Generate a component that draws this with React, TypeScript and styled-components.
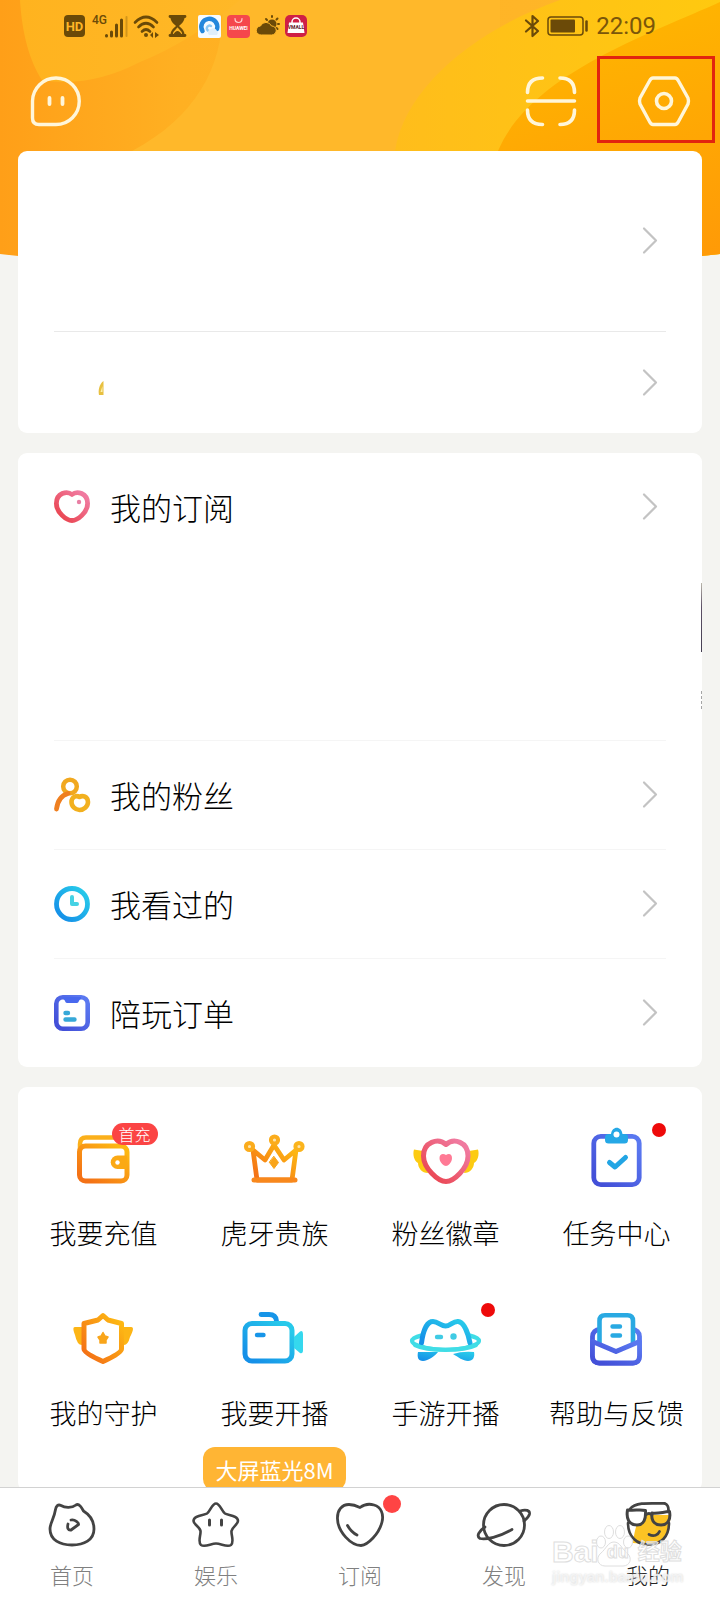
import React from "react";
import styled, { createGlobalStyle } from "styled-components";

const GlobalStyle = createGlobalStyle`
  * { box-sizing: border-box; }
  body {
    margin: 0;
    background: #f4f4f1;
    color: #000;
    font-family: "Noto Sans CJK SC", "Noto Sans", sans-serif;
    font-weight: 300;
  }
  a { color: inherit; text-decoration: none; }
  button { font: inherit; color: inherit; background: none; border: 0; padding: 0; cursor: pointer; }
  svg { display: block; }
`;

/* ---------- page frame ---------- */

const Screen = styled.div`
  position: relative;
  display: flex;
  flex-direction: column;
  height: 100vh;
  overflow: hidden;
`;

const Backdrop = styled.svg`
  position: absolute;
  top: 0;
  left: 0;
  width: 100%;
  height: 270px;
`;

const Header = styled.header`
  position: relative;
  flex: none;
`;

const StatusBar = styled.div`
  display: flex;
  align-items: center;
  height: 52px;
  padding: 0 64px;
  color: #6b4a08;
`;

const StatusGroup = styled.div<{ $gap: number }>`
  display: flex;
  align-items: center;
  gap: ${(p) => p.$gap}px;
`;

const RightStatus = styled(StatusGroup)`
  margin-left: auto;
`;

const Clock = styled.time`
  font: 400 24px/28px Roboto, sans-serif;
  color: #7a560a;
`;

const NavBar = styled.div`
  display: flex;
  align-items: center;
  height: 99px;
  padding: 0 5px 2px 30px;
`;

const IconButton = styled.button`
  display: flex;
  align-items: center;
  justify-content: center;
`;

const ScanButton = styled(IconButton)`
  margin-left: auto;
  margin-right: 20px;
`;

const SettingsButton = styled(IconButton)`
  width: 118px;
  height: 87px;
  padding: 4px 0 0 15px;
  margin-bottom: 3px;
  border: 3px solid #e2240f;
`;

const Content = styled.main`
  position: relative;
  flex: 1;
  min-height: 0;
  display: flex;
  flex-direction: column;
  gap: 20px;
  padding: 0 18px;
  overflow-y: auto;
  scrollbar-width: none;
`;

const Card = styled.section`
  flex: none;
  background: #fff;
  border-radius: 9px;
  overflow: hidden;
`;

/* ---------- list rows ---------- */

const Row = styled.a<{ $height: number; $line?: string }>`
  display: flex;
  align-items: center;
  height: ${(p) => p.$height}px;
  margin: 0 36px;
  padding-right: 8px;
  border-top: ${(p) => (p.$line ? `1px solid ${p.$line}` : "0")};
`;

const RowLabel = styled.span`
  margin-left: 20px;
  font-size: 31px;
  line-height: 44px;
`;

const RowEnd = styled.span`
  margin-left: auto;
`;

const Fleck = styled.svg`
  margin-left: 44px;
  margin-top: 10px;
`;

const Shelf = styled.div`
  display: flex;
  flex-direction: column;
  align-items: flex-end;
  gap: 39px;
  height: 180px;
  padding-top: 23px;
`;

const ShelfCover = styled.div`
  width: 1px;
  height: 69px;
  background: linear-gradient(#b9b6ab, #5c5066 35%, #453f52);
`;

const ShelfCaption = styled.div`
  height: 18px;
  border-left: 1px dashed #a5a5a5;
`;

/* ---------- shortcut grid ---------- */

const Grid = styled.div`
  display: grid;
  grid-template-columns: repeat(4, 1fr);
`;

const Shortcut = styled.a`
  display: flex;
  flex-direction: column;
  align-items: center;
  gap: 22px;
  height: 180px;
  padding-top: 40px;
`;

const ShortcutIcon = styled.span`
  position: relative;
`;

const ShortcutLabel = styled.span`
  font-size: 27px;
  line-height: 40px;
  white-space: nowrap;
`;

const Dot = styled.span<{ $size: number; $color: string; $left: number; $top: number }>`
  position: absolute;
  left: ${(p) => p.$left}px;
  top: ${(p) => p.$top}px;
  width: ${(p) => p.$size}px;
  height: ${(p) => p.$size}px;
  border-radius: 50%;
  background: ${(p) => p.$color};
`;

const Tag = styled.span`
  position: absolute;
  left: 44px;
  top: -4px;
  width: 46px;
  border-radius: 11px;
  background: #fb4444;
  color: #fff;
  font-size: 16px;
  line-height: 22px;
  text-align: center;
`;

const Promo = styled.div`
  grid-column: 2;
  justify-self: center;
  padding: 0 12px;
  border-radius: 12px;
  background: #ffb534;
  color: #fff;
  font-size: 22px;
  font-weight: 400;
  line-height: 44px;
  white-space: nowrap;
`;

/* ---------- tab bar ---------- */

const TabBar = styled.nav`
  position: relative;
  flex: none;
  display: grid;
  grid-template-columns: repeat(5, 1fr);
  padding: 13px 0 11px;
  border-top: 1px solid #d2d2d2;
  background: #fff;
`;

const Tab = styled.button<{ $active?: boolean }>`
  display: flex;
  flex-direction: column;
  align-items: center;
  gap: 10px;
  font-size: 22px;
  line-height: 30px;
  color: ${(p) => (p.$active ? "#222" : "#808080")};
`;

const Watermark = styled.div`
  position: absolute;
  right: 38px;
  bottom: 14px;
  width: 130px;
  pointer-events: none;
  font-family: "Liberation Sans", "Noto Sans CJK SC", sans-serif;
  font-weight: 700;
  color: rgba(255, 255, 255, 0.6);
`;

const WatermarkName = styled.div`
  position: relative;
  display: flex;
  align-items: flex-end;
  height: 44px;
  line-height: 32px;
  font-size: 30px;
  -webkit-text-stroke: 1px #dedede;
`;

const WatermarkPaw = styled.svg`
  position: absolute;
  left: 42px;
  top: 0;
`;

const WatermarkSmall = styled.span<{ $indent: number; $size: number }>`
  position: relative;
  margin-left: ${(p) => p.$indent}px;
  font-size: ${(p) => p.$size}px;
  white-space: nowrap;
`;

const WatermarkUrl = styled.div`
  font-size: 15px;
  line-height: 18px;
  text-shadow: 0 0 2px #d4d4d4;
`;

/* ---------- icons ---------- */

const Gradients = () => (
  <svg width="0" height="0" aria-hidden="true" style={{ position: "absolute" }}>
    <defs>
      {[
        ["orange", "#f47216", "#fdb713"],
        ["rose", "#ea4550", "#f07aa0"],
        ["sky", "#1590e8", "#27c9ea"],
        ["indigo", "#4350d8", "#5a78f0"],
      ].map(([id, from, to]) => (
        <linearGradient key={id} id={id} x1="0" y1="1" x2="1" y2="0">
          <stop offset="0.1" stopColor={from} />
          <stop offset="0.9" stopColor={to} />
        </linearGradient>
      ))}
    </defs>
  </svg>
);

type ArtProps = { w: number; h: number; children: React.ReactNode };
const Art = ({ w, h, children }: ArtProps) => (
  <svg width={w} height={h} viewBox={`0 0 ${w} ${h}`} fill="none" strokeLinecap="round" strokeLinejoin="round" overflow="visible" aria-hidden="true">
    {children}
  </svg>
);

const Chevron = () => (
  <Art w={16} h={28}>
    <path d="M2 1.500L14 13.500L2 25.500" stroke="#c3c3c3" strokeWidth="2.200" />
  </Art>
);

const rowIcons = {
  heart: (
    <Art w={36} h={36}>
      <path d="M18 5.500C23 1.500 33.600 4 33.600 14.500C33.600 23.500 23.500 31.500 18 31.500C12.500 31.500 2.400 23.500 2.400 14.500C2.400 4 13 1.500 18 5.500Z" stroke="url(#rose)" strokeWidth="4.800" />
      <circle cx="25" cy="13" r="2.200" fill="#e87fa4" />
    </Art>
  ),
  fans: (
    <Art w={36} h={36}>
      <circle cx="16" cy="9.500" r="6.800" stroke="#f1a81f" strokeWidth="4.500" />
      <path d="M14 16.500C7 18.500 3.500 24 2.500 32" stroke="#ef7f20" strokeWidth="4.800" />
      <path d="M25.500 20C28.500 18 34 19.500 34 25C34 29.500 29.500 33 25.500 33C21.500 33 17.500 29.500 17.500 25C17.500 19.500 22.500 18 25.500 20Z" stroke="#f2b01f" strokeWidth="4.600" />
    </Art>
  ),
  clock: (
    <Art w={36} h={36}>
      <circle cx="18" cy="18" r="15.500" stroke="url(#sky)" strokeWidth="4.800" />
      <path d="M18 11V18H23" stroke="#45d2e4" strokeWidth="4" />
    </Art>
  ),
  order: (
    <Art w={36} h={36}>
      <rect x="2.300" y="2.300" width="31.400" height="31.400" rx="6.500" stroke="url(#indigo)" strokeWidth="4.600" />
      <path d="M9 2H27V4C25 4 25 8 23 8H13C11 8 11 4 9 4Z" fill="#4868ee" />
      <path d="M11.500 18H14M11.500 24.500H20.500" stroke="#36a8d8" strokeWidth="4.400" />
    </Art>
  ),
};

const gridIcons = {
  wallet: (
    <Art w={72} h={64}>
      <path d="M12 22V17Q12 10.500 18 10.500H50Q54 10.500 55 18" stroke="#fbb01b" strokeWidth="4.500" />
      <rect x="11.500" y="19" width="47.500" height="35" rx="6" stroke="url(#orange)" strokeWidth="5" />
      <path d="M59 28.500H49.500A6.500 6.500 0 0 0 49.500 42H59Z" fill="#fba914" />
      <circle cx="49.500" cy="35.500" r="2.200" fill="#fff" />
    </Art>
  ),
  crown: (
    <Art w={72} h={64}>
      <path d="M14 23L26 33L35 18L45 33L57 23L53 53H18Z" stroke="url(#orange)" strokeWidth="4.800" />
      <path d="M15 53H56" stroke="#f8881c" strokeWidth="5" />
      <path d="M35 29.500L39.500 35.500L35 41.500L30.500 35.500Z" fill="#f9a51a" stroke="#f9a51a" />
      <circle cx="10.500" cy="19.500" r="3.600" fill="#fde4ae" stroke="#fbac1c" strokeWidth="4" />
      <circle cx="35.500" cy="13" r="3.600" fill="#fde4ae" stroke="#fbac1c" strokeWidth="4" />
      <circle cx="60" cy="19.500" r="3.600" fill="#fde4ae" stroke="#fbb41c" strokeWidth="4" />
    </Art>
  ),
  badge: (
    <Art w={72} h={64}>
      <path d="M13 24L4 22.500C2.500 27 4 34 8 36C8 41 12 46 18 46ZM59 24L68 22.500C69.500 27 68 34 64 36C64 41 60 46 54 46Z" fill="#fccb12" />
      <path d="M36 17.500C44 10.500 58 15 58 29C58 41 44 54.500 36 54.500C28 54.500 13.500 41 13.500 29C13.500 15 28 10.500 36 17.500Z" fill="#fff" stroke="url(#rose)" strokeWidth="5" />
      <path d="M36 28C38.500 26 42 26.500 42 31C42 35.500 38 39 36 39C34 39 29.500 35.500 29.500 31C29.500 26.500 33.500 26 36 28Z" fill="#ff7a95" />
    </Art>
  ),
  task: (
    <Art w={72} h={64}>
      <rect x="12.800" y="9.300" width="45.400" height="48.400" rx="7" stroke="url(#indigo)" strokeWidth="4.800" />
      <path d="M28 7H30C31 -1.500 40.500 -1.500 41.500 7H44Q47 7 47 10V13Q47 16.500 43.500 16.500H27.500Q24 16.500 24 13V10Q24 7 28 7Z" fill="#25a8e6" />
      <circle cx="35.500" cy="7.500" r="3" fill="#fff" />
      <path d="M28.500 35.500L34 40L44.500 30.500" stroke="#22a5e4" strokeWidth="5" />
    </Art>
  ),
  guard: (
    <Art w={72} h={64}>
      <path d="M14 20H7C4 20 6 25 7 28Q9 38 14 38ZM56 20H63C67 20 64 26 62 30Q60 38 56 38Z" fill="#fdb515" />
      <path d="M35 8.500L40 13L53.500 16.500V42Q53.500 46 35 54.500Q16 46 16 42V16.500L30 13Z" fill="#fff" stroke="url(#orange)" strokeWidth="5" />
      <path d="M35 25.500L37 29L40 30L38 33V36H32V33L30 30L33 29Z" fill="#f9a51a" stroke="#f9a51a" strokeWidth="1.500" />
    </Art>
  ),
  camera: (
    <Art w={72} h={64}>
      <path d="M22 7.500H30Q37 7.500 37.500 14" stroke="#1795e8" strokeWidth="4.800" />
      <rect x="6" y="16.500" width="47" height="37.500" rx="7" stroke="url(#sky)" strokeWidth="5" />
      <path d="M55 30L61 24.500Q64 23 64 27V43Q64 47 61 46L55 41Z" fill="#35d8ee" />
      <path d="M18 28H24.500" stroke="#1795e8" strokeWidth="4.400" />
    </Art>
  ),
  mobile: (
    <Art w={72} h={64}>
      <path d="M8 45H28C26 48 18 54 13 54C8 54 7 50 8 45ZM43 47Q52 44 64 45C65 50 63 54 58 54C53 54 48 50 43 47Z" fill="url(#sky)" />
      <ellipse cx="35.500" cy="34" rx="33.500" ry="8" stroke="#40dde6" strokeWidth="4.200" />
      <path d="M11.500 37C13 24 17 14.500 23 14.500C28 14.500 31 19 35.500 19C40 19 43 14 48 14.500C54 15 58 26 60 37C50 42 22 42 11.500 37Z" fill="#fff" />
      <path d="M11.500 36C13 24 17 14.500 23 14.500C28 14.500 31 19 35.500 19C40 19 43 14 48 14.500C54 15 58 26 60 36" stroke="url(#sky)" strokeWidth="5" />
      <path d="M5 38C18 44.500 53 44.500 66 38" stroke="#40dde6" strokeWidth="4.200" />
      <path d="M27 30H31" stroke="#40cbe4" strokeWidth="4.400" />
      <circle cx="43.500" cy="29.500" r="3.200" fill="#40cbe4" />
    </Art>
  ),
  help: (
    <Art w={72} h={64}>
      <rect x="11.500" y="22.500" width="47" height="33.500" rx="7" stroke="url(#indigo)" strokeWidth="4.800" />
      <path d="M18.500 38V14Q18.500 8.300 24 8.300H46.500Q52 8.300 52 14V38L35 45Z" fill="#fff" stroke="#29a9e2" strokeWidth="4.600" />
      <path d="M11.500 34.500L35 44.500L58.500 34.500V49Q58.500 56 52 56H18.500Q11.500 56 11.500 49Z" fill="#fff" stroke="url(#indigo)" strokeWidth="4.800" />
      <path d="M31.500 19.500H39M31.500 28.500H39" stroke="#29a9e2" strokeWidth="4.400" />
    </Art>
  ),
};

const INK = "#434343";

const tabIcons = {
  home: (
    <Art w={56} h={48}>
      <path d="M11.500 8.500C12 5 14 3 17 4.500C21 7 28 7 32 4C35 2 38 7 39.500 10C46 14 50 21 50 28C50 39 40 44 28 44C16 44 6 39 6 28C6 22 10 18 11.500 8.500Z" stroke={INK} strokeWidth="2.800" />
      <path d="M24 23C23 27 24 29.500 27 29L34.500 23.500C35 22 31 18 27 19" stroke={INK} strokeWidth="2.800" />
    </Art>
  ),
  fun: (
    <Art w={56} h={48}>
      <path d="M28 2.500C32 2.500 33.500 10 37 12.500C40 14.500 50 14 50 20C50 23.500 44 26 43.500 30C43 34 46.500 41 43 44C39 46.500 33 42.500 28 42.500C23 42.500 17 46.500 13 44C9.500 41 13 34 12.500 30C12 26 5.500 23.500 5.500 20C5.500 14 16 14.500 19 12.500C22.500 10 24 2.500 28 2.500Z" stroke={INK} strokeWidth="2.600" />
      <path d="M21.500 19V24M33.500 19V24" stroke={INK} strokeWidth="3" />
    </Art>
  ),
  follow: (
    <Art w={56} h={48}>
      <path d="M28 6.500C32 3.500 37 2.500 42 4C49 6 52 13 50 21C47 33 36 44 29 44.500C19 44.500 6 31 5.500 18C5 9 10 3.500 17 3.500C22 3.500 25 5 28 6.500Z" stroke={INK} strokeWidth="2.800" />
      <path d="M15.500 24.500C18 29 21 32 25 34" stroke={INK} strokeWidth="2.800" />
    </Art>
  ),
  discover: (
    <Art w={56} h={48}>
      <circle cx="28" cy="24" r="20.500" stroke={INK} strokeWidth="2.800" />
      <path d="M9 26C3 30 0 35 4 37.500C10 39 23 36 36 28.500M44 10C50 8 54 9.500 53.500 13C53 16 50 18 48 20" stroke={INK} strokeWidth="2.800" />
    </Art>
  ),
  mine: (
    <Art w={56} h={48}>
      <path d="M13 42C14 36 15 22 22 14H50C51 26 48 44 29 44C22 44 17 42 13 42Z" fill="#fcc324" />
      <path d="M8 22C8 36 17 43.500 28.500 43.500C41 43.500 49 36 49 22" stroke={INK} strokeWidth="2.600" />
      <path d="M8 8.500H25.500Q25.500 23.500 17 23.500Q7 23 8 8.500Z" fill="#fff" />
      <path d="M7.500 9C15 10 19 8 25.500 9.500C26 18 24 24 17 24C9 24 6 18 7.500 9ZM32 12C37 13 43 11 49.500 10.500C51 18 48 24 41 24C33 24 31 18 32 12ZM25.500 14C28 12 30 12 32 14" stroke={INK} strokeWidth="3" />
      <path d="M10 8C15 1.500 26 2 45 2.500Q48.500 4 48.500 9" stroke={INK} strokeWidth="2.800" />
      <path d="M29 33.500C34 36 38 34 39.500 30.500" stroke={INK} strokeWidth="2.800" />
    </Art>
  ),
};

const HeaderBackdrop = () => (
  <Backdrop viewBox="0 0 720 270" preserveAspectRatio="none" aria-hidden="true">
    <defs>
      <linearGradient id="skyLeft" x1="0" x2="1">
        <stop offset="0" stopColor="#ff9f18" />
        <stop offset="0.250" stopColor="#ffb022" />
        <stop offset="1" stopColor="#ffb82a" />
      </linearGradient>
      <linearGradient id="blob" x1="0" y1="0" x2="1" y2="0">
        <stop offset="0" stopColor="#ffb31f" />
        <stop offset="1" stopColor="#ffb827" />
      </linearGradient>
      <linearGradient id="band" x1="0" y1="0" x2="1" y2="0">
        <stop offset="0" stopColor="#ffbd1b" />
        <stop offset="1" stopColor="#ffc90f" />
      </linearGradient>
      <linearGradient id="corner" x1="0.500" y1="0" x2="0.700" y2="1">
        <stop offset="0" stopColor="#ffb600" />
        <stop offset="1" stopColor="#ff9a07" />
      </linearGradient>
      <clipPath id="arc">
        <path d="M0 0H720V254Q360 296 0 254Z" />
      </clipPath>
    </defs>
    <g clipPath="url(#arc)">
      <rect width="720" height="270" fill="url(#skyLeft)" />
      <path d="M222 0C226 60 200 115 132 151V270H500V0Z" fill="#ffb82a" />
      <path d="M20 0C22 34 30 62 42 80Q90 88 140 62Q190 42 240 0Z" fill="url(#blob)" />
      <path d="M560 0C480 28 405 85 395 151V270H720V0Z" fill="url(#band)" />
      <path d="M720 2C645 36 530 75 498 151V270H720Z" fill="url(#corner)" />
    </g>
  </Backdrop>
);

const Status = () => (
  <StatusBar>
    <StatusGroup $gap={6}>
      <Art w={21} h={22}>
        <rect width="21" height="22" rx="4" fill="currentColor" />
        <text x="10.500" y="16" textAnchor="middle" fontSize="13" fontFamily="Roboto, sans-serif" fontWeight="700" fill="#ffb726">HD</text>
      </Art>
      <Art w={36} h={24}>
        <text x="1" y="10" fontSize="12" fontFamily="Roboto, sans-serif" fontWeight="500" fill="currentColor">4G</text>
        <g stroke="currentColor" strokeWidth="3">
          <path d="M15.500 21.500V22M20.500 18V22M25.500 11V22M30.500 6V22" />
          <path d="M35.500 3V22" strokeOpacity="0.300" strokeWidth="2" />
        </g>
      </Art>
      <Art w={26} h={24}>
        <path d="M2 8.500Q13 -2.500 24 8.500M5.500 13Q13 5.500 20.500 13M9 17.500Q13 13.500 17 17.500" stroke="currentColor" strokeWidth="2.600" />
        <circle cx="13" cy="21" r="2" fill="currentColor" />
        <path d="M20 18V24L17 21ZM22 18V24L26 21Z" fill="currentColor" />
      </Art>
      <Art w={27} h={22}>
        <path d="M5 1.500H20M5 20.500H20" stroke="currentColor" strokeWidth="2.800" />
        <path d="M6.500 2C6.500 8 12 9 12 11C12 13 6.500 14 6.500 20M18.500 2C18.500 8 13 9 13 11C13 13 18.500 14 18.500 20" stroke="currentColor" strokeWidth="2.200" />
        <path d="M7 2H18C18 7 14 9 12.500 11C11 9 7 7 7 2ZM8 20Q12.500 12 17 20Z" fill="currentColor" />
      </Art>
      <Art w={23} h={23}>
        <rect width="23" height="23" rx="2" fill="#f6fbff" />
        <path d="M4.500 16A8 8 0 1 1 19 14" stroke="#2487dc" strokeWidth="4.500" />
        <path d="M11 16C7 15 9 9 13 11" stroke="#8cc8f4" strokeWidth="2.500" />
        <path d="M11 20A3.500 3.500 0 0 1 13 14A4 4 0 0 1 19 16A3 3 0 0 1 19 20Z" fill="#dfeefa" />
      </Art>
      <Art w={23} h={23}>
        <rect width="23" height="23" rx="4" fill="#f5474c" />
        <path d="M8 3.500Q8 7.500 11.500 7.500T15 3.500" stroke="#ffd0cd" strokeWidth="1.200" />
        <text x="11.500" y="15" textAnchor="middle" fontSize="5" fontFamily="Roboto, sans-serif" fontWeight="700" fill="#fff">HUAWEI</text>
      </Art>
      <Art w={23} h={22}>
        <circle cx="16" cy="9" r="4.500" fill="currentColor" />
        <path d="M11 5L10 4M16 2V1M20.500 4.500L21.500 3.500M22 9H23M20.500 13L21.500 14" stroke="currentColor" strokeWidth="2" />
        <path d="M5 20A4.500 4.500 0 0 1 4.500 11A6 6 0 0 1 15.500 11A4.500 4.500 0 0 1 16 20Z" fill="currentColor" stroke="#ffb82a" strokeWidth="1" />
      </Art>
      <Art w={22} h={22}>
        <rect width="22" height="22" rx="5" fill="#cf1f45" />
        <path d="M7 9V7A4 4 0 0 1 15 7V9" stroke="#fff" strokeWidth="1.500" />
        <path d="M4 7.500H18L19.500 18H2.500Z" fill="#fff" />
        <text x="11" y="14" textAnchor="middle" fontSize="5" fontFamily="Roboto, sans-serif" fontWeight="700" fill="#5b1524">VMALL</text>
      </Art>
    </StatusGroup>
    <RightStatus $gap={7}>
      <Art w={16} h={24}>
        <path d="M2 6.500L14 17L8.500 22V2L14 7L2 17.500" stroke="currentColor" strokeWidth="2.200" />
      </Art>
      <Art w={42} h={20}>
        <rect x="1" y="1" width="35" height="18" rx="3" stroke="currentColor" strokeWidth="1.500" />
        <rect x="3.500" y="3.500" width="24.500" height="13" rx="1" fill="currentColor" />
        <path d="M39.500 5.500V14.500" stroke="currentColor" strokeWidth="2.500" />
      </Art>
      <Clock>22:09</Clock>
    </RightStatus>
  </StatusBar>
);

const CREAM = "#fff6da";

type ShortcutItem = { label: string; icon: keyof typeof gridIcons; tag?: string; dot?: boolean };
const shortcuts: ShortcutItem[] = [
  { label: "我要充值", icon: "wallet", tag: "首充" },
  { label: "虎牙贵族", icon: "crown" },
  { label: "粉丝徽章", icon: "badge" },
  { label: "任务中心", icon: "task", dot: true },
  { label: "我的守护", icon: "guard" },
  { label: "我要开播", icon: "camera" },
  { label: "手游开播", icon: "mobile", dot: true },
  { label: "帮助与反馈", icon: "help" },
];

const links: { label: string; icon: keyof typeof rowIcons }[] = [
  { label: "我的粉丝", icon: "fans" },
  { label: "我看过的", icon: "clock" },
  { label: "陪玩订单", icon: "order" },
];

const tabs: { label: string; icon: keyof typeof tabIcons; dot?: boolean; active?: boolean }[] = [
  { label: "首页", icon: "home" },
  { label: "娱乐", icon: "fun" },
  { label: "订阅", icon: "follow", dot: true },
  { label: "发现", icon: "discover" },
  { label: "我的", icon: "mine", active: true },
];

export default function App() {
  return (
    <Screen>
      <GlobalStyle />
      <Gradients />
      <HeaderBackdrop />
      <Header>
        <Status />
        <NavBar>
          <IconButton aria-label="消息">
            <Art w={52} h={52}>
              <path d="M26 3A23 23 0 0 1 26 49.500H9Q2.500 49.500 2.500 43V26A23.500 23.500 0 0 1 26 3Z" stroke={CREAM} strokeWidth="3.400" />
              <path d="M19.500 23V29M32.500 23V29" stroke={CREAM} strokeWidth="3.800" />
            </Art>
          </IconButton>
          <ScanButton aria-label="扫一扫">
            <Art w={52} h={52}>
              <path d="M2.500 17.500Q2.500 3 17.500 3M35 3Q49.500 3 49.500 17.500M2.500 35Q2.500 49.500 17.500 49.500M35 49.500Q49.500 49.500 49.500 35M2.500 26H49.500" stroke={CREAM} strokeWidth="3.600" />
            </Art>
          </ScanButton>
          <SettingsButton aria-label="设置">
            <Art w={52} h={52}>
              <path d="M15 3H37Q39 3 40.500 6L50 23Q51 26 50 29L40.500 46.500Q39 49.500 37 49.500H15Q13 49.500 11.500 46.500L2 29Q1 26 2 23L11.500 6Q13 3 15 3Z" stroke={CREAM} strokeWidth="3.400" />
              <circle cx="26" cy="26" r="7.500" stroke={CREAM} strokeWidth="3.600" />
            </Art>
          </SettingsButton>
        </NavBar>
      </Header>

      <Content>
        <Card>
          <Row href="#profile" $height={180} aria-label="个人资料">
            <RowEnd><Chevron /></RowEnd>
          </Row>
          <Row href="#wallet" $height={102} $line="#e9e9e9" aria-label="钱包">
            <Fleck width="6" height="16" viewBox="0 0 6 16" aria-hidden="true">
              <path d="M5.500 1V15H1C0 11 1 4 5.500 1Z" fill="#e8c040" />
              <path d="M4.500 6V12H2.500Z" fill="#fdf0b0" />
            </Fleck>
            <RowEnd><Chevron /></RowEnd>
          </Row>
        </Card>

        <Card>
          <Row href="#follow" $height={107}>
            {rowIcons.heart}
            <RowLabel>我的订阅</RowLabel>
            <RowEnd><Chevron /></RowEnd>
          </Row>
          <Shelf>
            <ShelfCover />
            <ShelfCaption />
          </Shelf>
          {links.map((l) => (
            <Row key={l.label} href={`#${l.icon}`} $height={109} $line="#f5f5f5">
              {rowIcons[l.icon]}
              <RowLabel>{l.label}</RowLabel>
              <RowEnd><Chevron /></RowEnd>
            </Row>
          ))}
        </Card>

        <Card>
          <Grid>
            {shortcuts.map((s) => (
              <Shortcut key={s.label} href={`#${s.icon}`}>
                <ShortcutIcon>
                  {gridIcons[s.icon]}
                  {s.tag && <Tag>{s.tag}</Tag>}
                  {s.dot && <Dot $size={14} $color="#ee0a0a" $left={71} $top={-4} />}
                </ShortcutIcon>
                <ShortcutLabel>{s.label}</ShortcutLabel>
              </Shortcut>
            ))}
            <Promo>大屏蓝光8M</Promo>
          </Grid>
        </Card>
      </Content>

      <TabBar>
        {tabs.map((t) => (
          <Tab key={t.label} $active={t.active}>
            <ShortcutIcon>
              {tabIcons[t.icon]}
              {t.dot && <Dot $size={18} $color="#ff4444" $left={51} $top={-6} />}
            </ShortcutIcon>
            {t.label}
          </Tab>
        ))}
        <Watermark>
          <WatermarkName>
            <WatermarkPaw width="40" height="44" viewBox="0 0 40 44" fill="#fff" fillOpacity="0.500" stroke="#dedede" aria-hidden="true">
              <ellipse cx="7" cy="18" rx="4.500" ry="6" />
              <ellipse cx="15" cy="8" rx="4.500" ry="6.500" />
              <ellipse cx="26" cy="8" rx="4.500" ry="6.500" />
              <ellipse cx="34" cy="18" rx="4.500" ry="6" />
              <path d="M20 18C26 18 28 25 33 29C39 34 36 42 29 42H11C4 42 1 34 7 29C12 25 14 18 20 18Z" />
            </WatermarkPaw>
            Bai
            <WatermarkSmall $indent={8} $size={18}>du</WatermarkSmall>
            <WatermarkSmall $indent={9} $size={22}>经验</WatermarkSmall>
          </WatermarkName>
          <WatermarkUrl>jingyan.baidu.com</WatermarkUrl>
        </Watermark>
      </TabBar>
    </Screen>
  );
}
